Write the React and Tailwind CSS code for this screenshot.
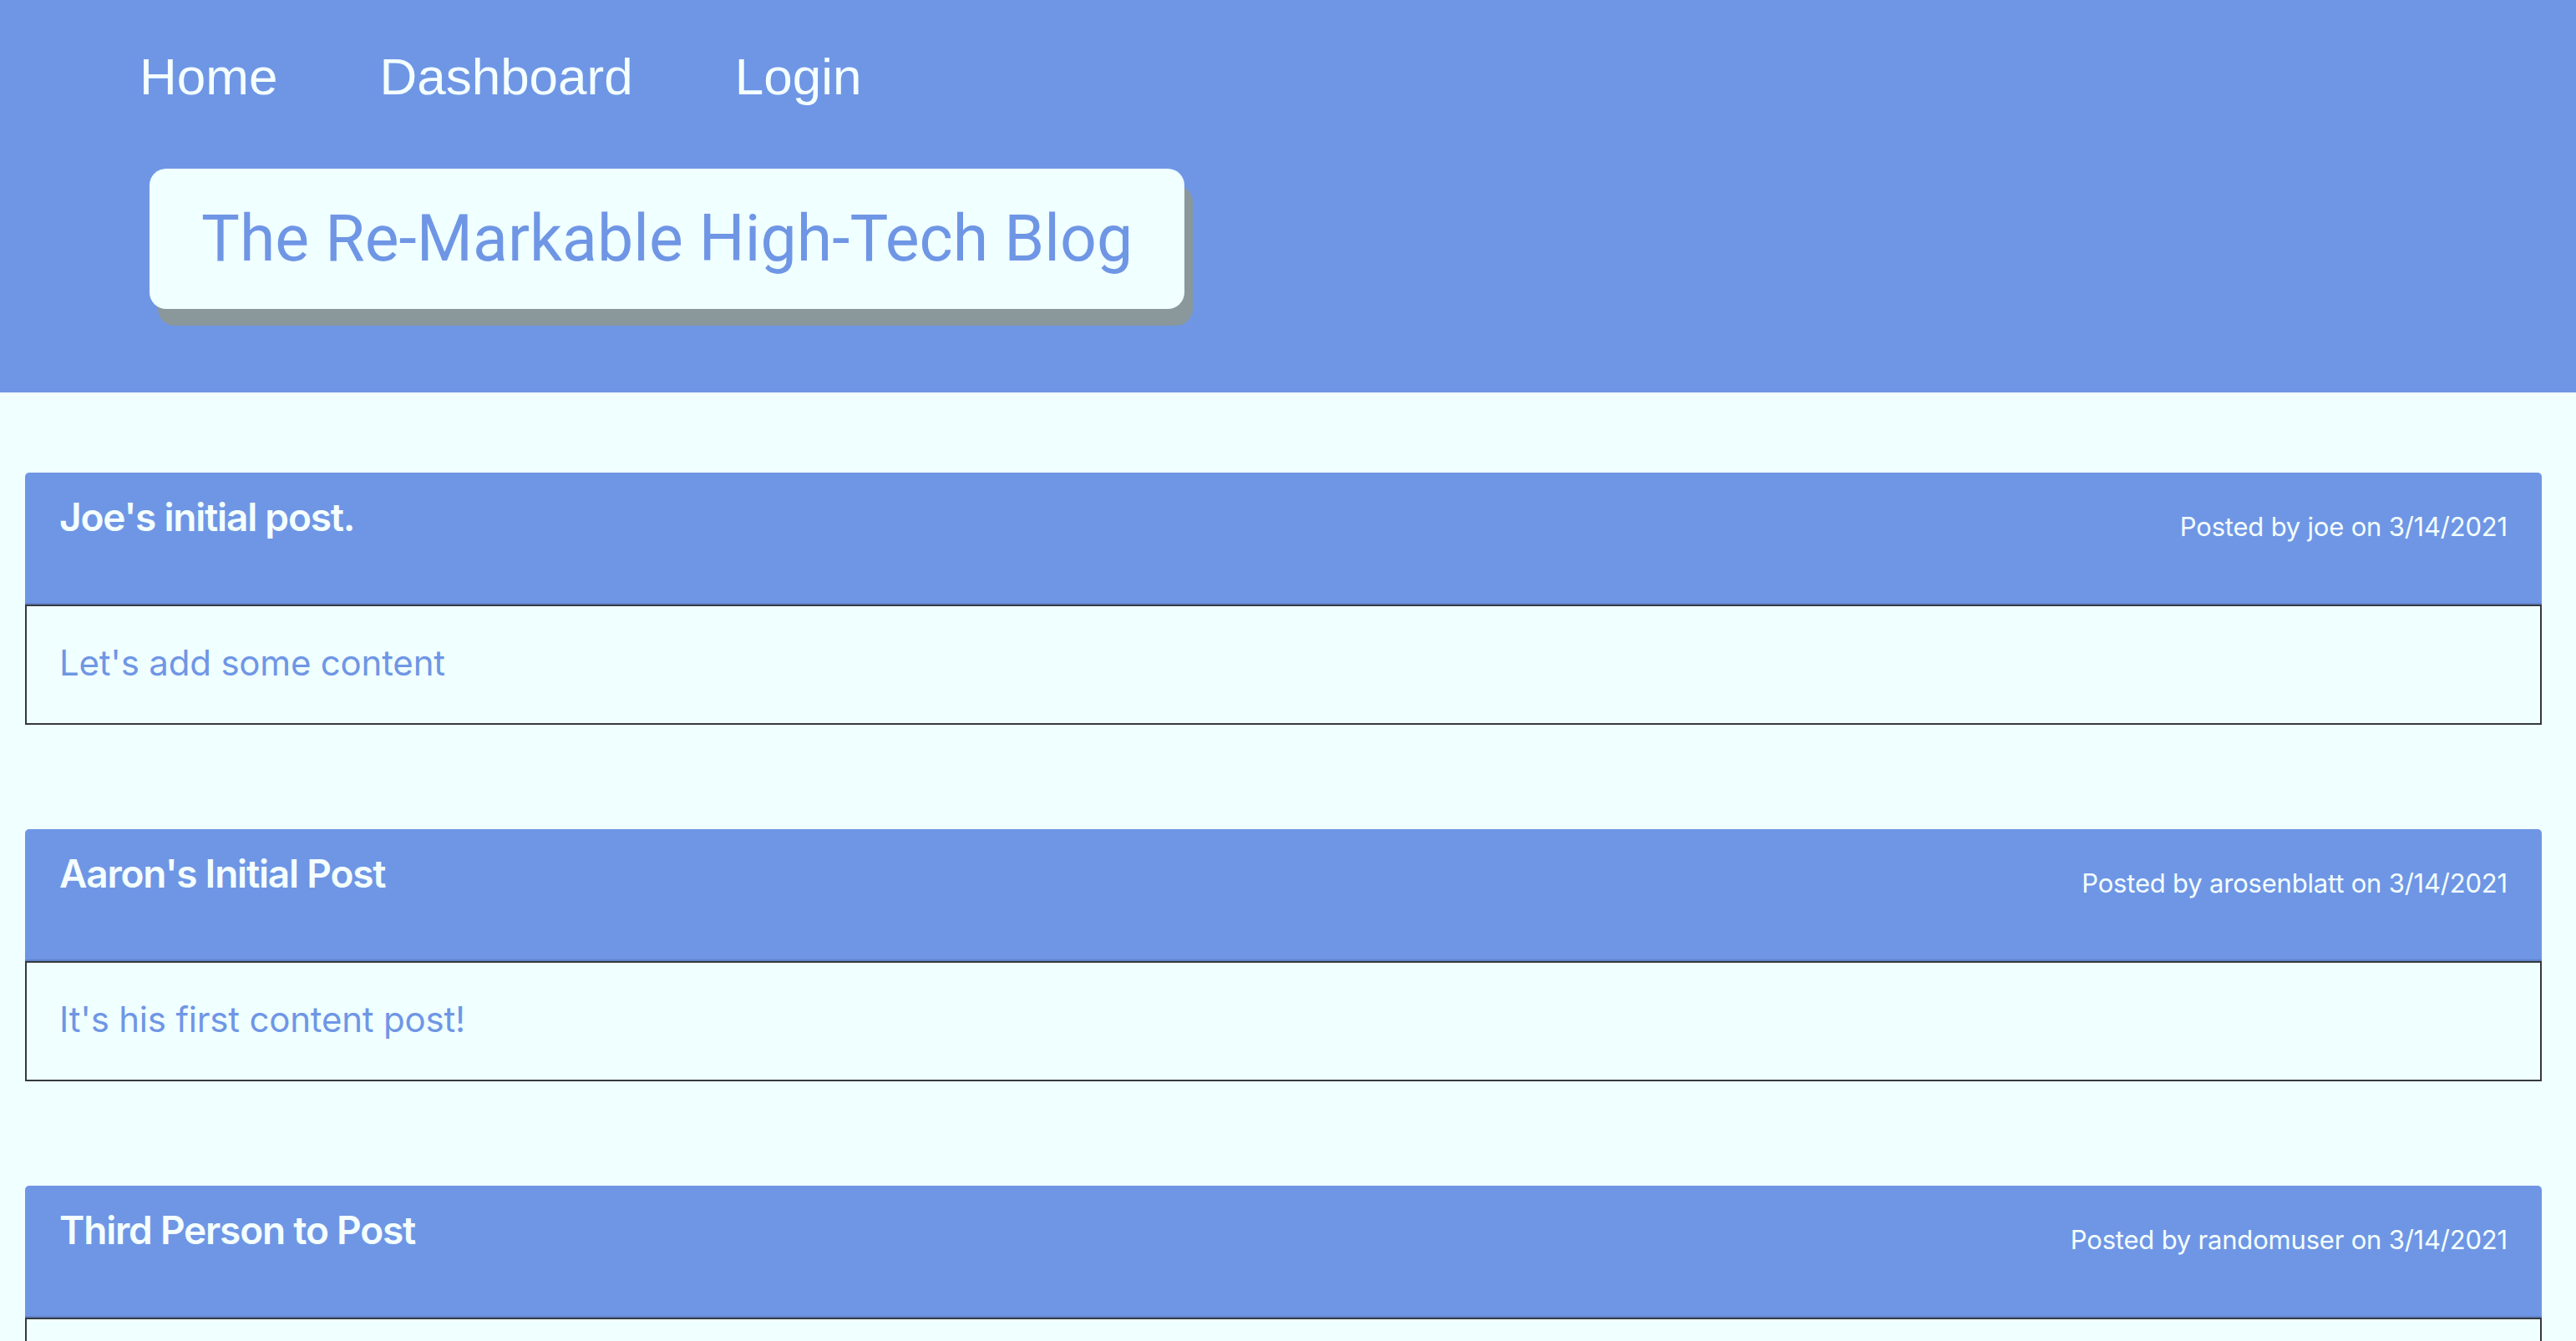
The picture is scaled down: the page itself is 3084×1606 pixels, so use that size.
import React from "react";

const posts = [
  { title: "Joe's initial post.", author: "joe", date: "3/14/2021", body: "Let's add some content" },
  { title: "Aaron's Initial Post", author: "arosenblatt", date: "3/14/2021", body: "It's his first content post!" },
  { title: "Third Person to Post", author: "randomuser", date: "3/14/2021", body: "Here is my first post." },
];

export default function App() {
  return (
    <div className="min-h-screen bg-[#f0ffff]">
      <header className="bg-[#6f96e5] pb-[100px]">
        <nav className="flex gap-[122px] pl-[167px] pt-[56px] font-['Liberation_Sans',Arial,sans-serif] text-[62px] leading-[72px] text-[#f4fffe]">
          <a href="#">Home</a>
          <a href="#">Dashboard</a>
          <a href="#">Login</a>
        </nav>
        <div className="ml-[179px] mt-[74px] inline-block rounded-[20px] bg-[#f0ffff] px-[62px] py-[38px] shadow-[10px_20px_0_#8a989c]">
          <h1 className="font-['Roboto',Arial,sans-serif] text-[77px] leading-[92px] text-[#6f96e5]">
            The Re-Markable High-Tech Blog
          </h1>
        </div>
      </header>
      <main className="flex flex-col gap-[125px] pl-[30px] pr-[41px] pt-[96px] font-['Inter',sans-serif]">
        {posts.map((p) => (
          <article key={p.title}>
            <div className="flex h-[158px] items-start justify-between rounded-t-[5px] border-b-2 border-[#6283c9] bg-[#6f96e5] px-[41px] text-[#f4fffe]">
              <h2 className="pt-[25px] text-[46px] font-semibold leading-[56px] tracking-[-1.2px]">{p.title}</h2>
              <span className="pt-[46px] text-[31px] leading-[38px] tracking-[-0.2px]">
                Posted by {p.author} on {p.date}
              </span>
            </div>
            <div className="border-2 border-t-2 border-[#343a40] bg-[#f0ffff] px-[39px] pb-[46px] pt-[41px]">
              <p className="text-[42px] leading-[53px] tracking-[-0.2px] text-[#6f96e5]">{p.body}</p>
            </div>
          </article>
        ))}
      </main>
    </div>
  );
}
